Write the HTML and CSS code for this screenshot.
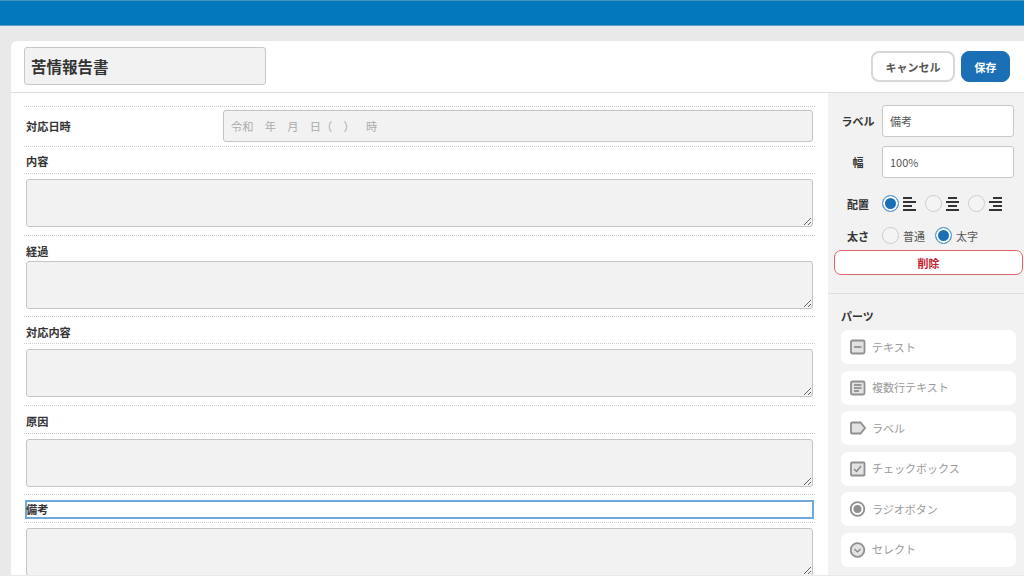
FILE: index.html
```html
<!DOCTYPE html>
<html lang="ja">
<head>
<meta charset="utf-8">
<title>苦情報告書</title>
<link rel="stylesheet" href="styles.css">
</head>
<body>
<header class="topbar"></header>
<main class="card">
  <div class="head">
    <div class="title">苦情報告書</div>
    <div class="actions">
      <button class="btn btn-cancel">キャンセル</button>
      <button class="btn btn-save">保存</button>
    </div>
  </div>
  <div class="body">
    <section class="form">
      <div class="row-date">
        <span class="label">対応日時</span>
        <div class="date-input">令和　年　月　日（　）　時</div>
      </div>
      <div class="label-row"><span class="label">内容</span></div>
      <div class="area-wrap"><textarea class="area"></textarea></div>
      <div class="label-row plain"><span class="label">経過</span></div>
      <div class="area-wrap flush"><textarea class="area"></textarea></div>
      <div class="label-row"><span class="label">対応内容</span></div>
      <div class="area-wrap"><textarea class="area"></textarea></div>
      <div class="label-row"><span class="label">原因</span></div>
      <div class="area-wrap"><textarea class="area"></textarea></div>
      <div class="label-row selected"><span class="label sel-box">備考</span></div>
      <div class="area-wrap"><textarea class="area"></textarea></div>
    </section>
    <aside class="side">
      <div class="props">
        <div class="prop"><span class="prop-name">ラベル</span><div class="prop-input">備考</div></div>
        <div class="prop"><span class="prop-name">幅</span><div class="prop-input">100%</div></div>
        <div class="prop prop-radio">
          <span class="prop-name">配置</span>
          <span class="radio on"></span>
          <svg class="align" viewBox="0 0 13 14"><path d="M0 1h9M0 5h13M0 9h9M0 13h13"/></svg>
          <span class="radio"></span>
          <svg class="align" viewBox="0 0 13 14"><path d="M2 1h9M0 5h13M2 9h9M0 13h13"/></svg>
          <span class="radio"></span>
          <svg class="align" viewBox="0 0 13 14"><path d="M4 1h9M0 5h13M4 9h9M0 13h13"/></svg>
        </div>
        <div class="prop prop-weight">
          <span class="prop-name">太さ</span>
          <span class="radio"></span><span class="opt">普通</span>
          <span class="radio on"></span><span class="opt">太字</span>
        </div>
        <button class="delete">削除</button>
      </div>
      <div class="parts">
        <h2 class="parts-title">パーツ</h2>
        <div class="part">
          <svg class="ico" viewBox="0 0 16 16"><rect x="1" y="1.5" width="13.5" height="13" rx="1.5" class="box"/><path d="M4 8h7.500" class="ln"/></svg>
          テキスト</div>
        <div class="part">
          <svg class="ico" viewBox="0 0 16 16"><rect x="1" y="1.5" width="13.5" height="13" rx="1.5" class="box"/><path d="M4 5h7.500M4 8h7.500M4 11h5" class="ln"/></svg>
          複数行テキスト</div>
        <div class="part">
          <svg class="ico" viewBox="0 0 16 16"><path d="M1 3.500a1 1 0 0 1 1-1h8.500L15 8l-4.500 5.500H2a1 1 0 0 1-1-1z" class="box"/></svg>
          ラベル</div>
        <div class="part">
          <svg class="ico" viewBox="0 0 16 16"><rect x="1" y="1.500" width="13.500" height="13" rx="1" class="box"/><path d="M4 8l2.500 2.500 4.500-5.500" class="ln thin"/></svg>
          チェックボックス</div>
        <div class="part">
          <svg class="ico" viewBox="0 0 16 16"><circle cx="7.500" cy="8" r="6.800" class="ring"/><circle cx="7.500" cy="8" r="4" class="dot"/></svg>
          ラジオボタン</div>
        <div class="part">
          <svg class="ico" viewBox="0 0 16 16"><circle cx="7.500" cy="8" r="6.800" class="box"/><path d="M4.500 7l3 3 3-3" class="ln thin"/></svg>
          セレクト</div>
      </div>
    </aside>
  </div>
</main>
</body>
</html>
```
FILE: styles.css
```css
* { box-sizing: border-box; }
html, body { margin: 0; height: 100%; overflow: hidden; }
body {
  width: 1024px; height: 576px;
  background: #e9e9e9;
  font-family: "Noto Sans CJK JP", "Noto Sans", sans-serif;
  color: #333;
  display: flex; flex-direction: column;
}
.topbar { height: 26px; flex: none; background: #0378bd; border-top: 1px solid #4a93bf; border-bottom: 1px solid #5f9fc9; }
.card {
  flex: 1; min-height: 0;
  margin: 15px 0 1px 11px;
  background: #fff;
  border-radius: 6px 0 0 0;
  display: flex; flex-direction: column;
  overflow: hidden;
}
.head {
  height: 52px; flex: none;
  padding: 6px 14px 0 13px;
  border-bottom: 1px solid #ddd;
  display: flex; justify-content: space-between; align-items: flex-start;
}
.title {
  width: 242px; height: 38px;
  background: #f2f2f2;
  border: 1px solid #c8c8c8;
  border-radius: 3px;
  font-size: 15.500px; font-weight: 700;
  line-height: 36px; padding-left: 6px;
  color: #333;
}
.actions { display: flex; gap: 6px; padding-top: 4px; }
.btn {
  height: 31px; border-radius: 8px;
  font: 700 11px "Noto Sans CJK JP", sans-serif;
  padding: 0;
}
.btn-cancel { width: 84px; background: #fff; border: 2px solid #d8d8d8; color: #555; }
.btn-save { width: 49px; background: #1a6fb5; border: 1px solid #1a6fb5; color: #fff; }
.body { flex: 1; min-height: 0; display: flex; }
.form { width: 817px; flex: none; padding: 13px 13px 0 13px; overflow: hidden; }
.label { font-size: 11.200px; font-weight: 700; color: #333; }
.row-date {
  height: 40.600px;
  border-top: 1px dotted #ccc; border-bottom: 1px dotted #ccc;
  display: flex; align-items: center; justify-content: space-between;
  padding: 0 2px;
}
.date-input {
  width: 590px; height: 32px;
  background: #f2f2f2;
  border: 1px solid #c4c4c4; border-radius: 3px;
  font-size: 11.250px; color: #aaa;
  text-spacing-trim: space-all;
  font-feature-settings: "chws" 0;
  line-height: 30px; padding-left: 7px;
}
.label-row {
  height: 27.400px;
  border-bottom: 1px dotted #ccc;
  display: flex; align-items: center;
  padding: 3px 0 0 2px;
}
.label-row.plain { height: 24.800px; padding-top: 5px; border-bottom: 0; }
.area-wrap {
  height: 61.800px;
  padding: 5px 2px 0;
  border-bottom: 1px dotted #ccc;
  overflow: hidden;
}
.area-wrap.flush { height: 56.400px; padding-top: 0; }
.area {
  display: block; width: 100%; height: 48px;
  background: #f2f2f2;
  border: 1px solid #c4c4c4; border-radius: 3px;
  margin: 0; padding: 0;
}
.label-row.selected { padding: 2px 1px 0; }
.sel-box {
  display: block; width: 100%; height: 19px;
  border: 2px solid #6ea8dc;
  line-height: 15px;
  text-indent: -1px;
}
.side {
  flex: 1; background: #f2f2f2;
  display: flex; flex-direction: column;
}
.props { height: 201px; padding: 12px 1px 0 6px; border-bottom: 1px solid #ddd; flex: none; }
.prop { display: flex; align-items: center; height: 32px; margin-bottom: 9px; }
.prop-name {
  width: 48px; flex: none; text-align: center;
  font-size: 11px; font-weight: 700; color: #333;
}
.prop-input {
  width: 132px; height: 32px;
  background: #fff; border: 1px solid #c8c8c8; border-radius: 3px;
  font-size: 11px; color: #555; line-height: 30px; padding-left: 7px;
}
.prop-radio { height: 17px; margin: 17px 0 15px; }
.prop-weight { height: 17px; margin: 0 0 6px; }
.radio {
  width: 17px; height: 17px; border-radius: 50%;
  border: 1px solid #ccc; background: #f4f4f4; flex: none;
}
.radio.on { border-color: #5a9ad0; background: #1a6fb5; box-shadow: inset 0 0 0 2px #fff; }
.align { width: 13px; height: 14px; margin: 0 9px 0 4px; flex: none; }
.align path { stroke: #333; stroke-width: 2; fill: none; }
.opt { font-size: 11px; color: #555; margin: 0 10px 0 4px; }
.delete {
  display: block; width: 189px; height: 25px;
  background: #fff; border: 1px solid #e0636e; border-radius: 7px;
  color: #c8202c; font: 700 11px "Noto Sans CJK JP", sans-serif;
  padding: 0;
}
.parts { padding: 14px 8px 0 13px; }
.parts-title { margin: 0 0 6px; font-size: 11px; font-weight: 700; color: #333; line-height: 16px; }
.part {
  height: 34px; margin-bottom: 6.600px;
  background: #fff; border-radius: 7px;
  display: flex; align-items: center; gap: 6px;
  padding: 0 0 1px 9px;
  font-size: 11px; color: #999;
}
.ico { width: 16px; height: 16px; flex: none; margin-top: 1px; }
.ico .box { fill: #e2e2e2; stroke: #8f8f8f; stroke-width: 1.800; }
.ico .ln { stroke: #808080; stroke-width: 1.500; fill: none; }
.ico .thin { stroke-width: 1.200; }
.ico .ring { fill: #fff; stroke: #8f8f8f; stroke-width: 1.800; }
.ico .dot { fill: #8f8f8f; }
```
